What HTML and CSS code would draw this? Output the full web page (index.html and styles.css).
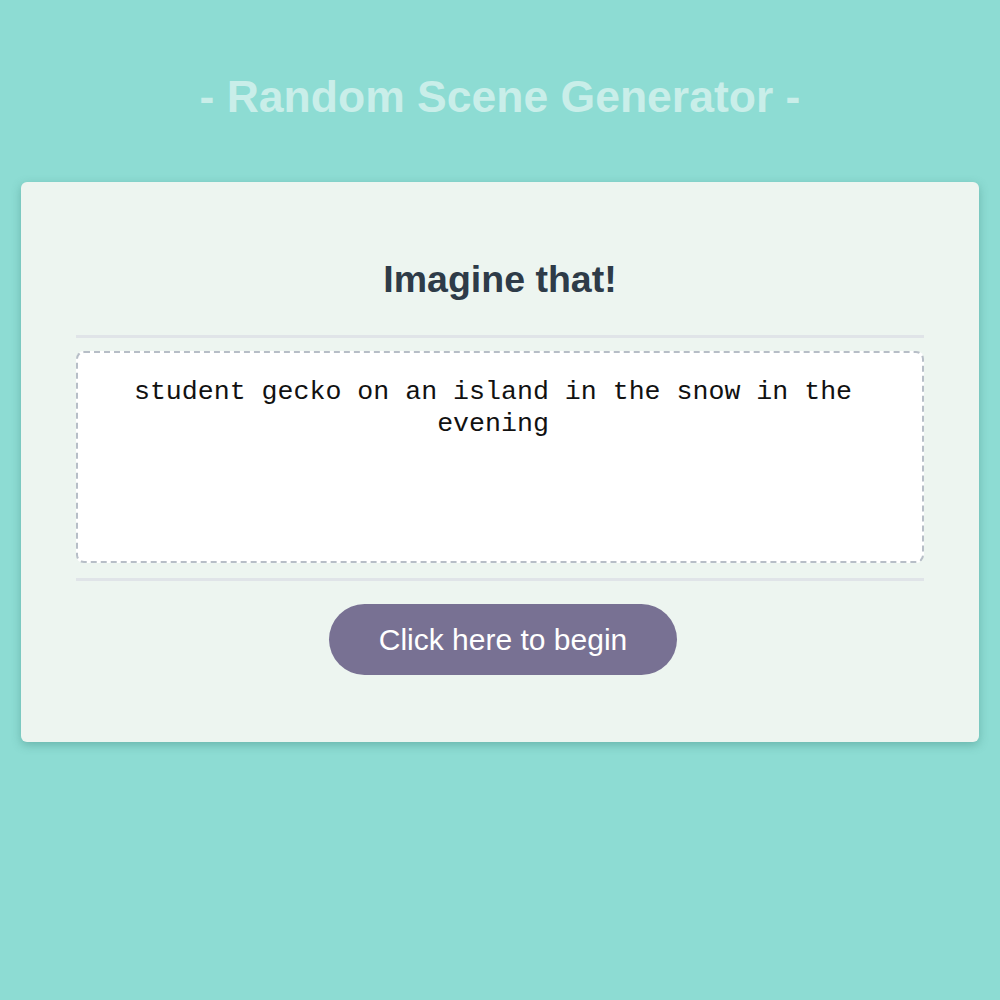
FILE: index.html
```html
<!DOCTYPE html>
<html>
<head>
<meta charset="utf-8">
<title>Random Scene Generator</title>
<link rel="stylesheet" href="styles.css">
</head>
<body>
  <h1 class="site-title">- Random Scene Generator -</h1>
  <main class="card">
    <h2 class="card-title">Imagine that!</h2>
    <div class="rule"></div>
    <div class="scene-box">
      <p class="scene-text">student gecko on an island in the snow in the evening</p>
    </div>
    <div class="rule rule-bottom"></div>
    <button class="begin-btn" type="button">Click here to begin</button>
  </main>
</body>
</html>
```

FILE: styles.css
```css
html, body {
  margin: 0;
  padding: 0;
}
body {
  background: #8ddcd3;
  font-family: "Liberation Sans", Arial, Helvetica, sans-serif;
  min-height: 1000px;
}
.site-title {
  margin: 0;
  padding-top: 70px;
  height: 182px;
  box-sizing: border-box;
  text-align: center;
  font-size: 44.5px;
  line-height: 54px;
  font-weight: bold;
  color: #c9eee9;
}
.card {
  margin: 0 21px;
  background: #edf5f0;
  border-radius: 6px;
  box-shadow: 0 3px 10px rgba(40, 110, 100, 0.35);
  padding: 76px 55px 67px;
  display: flex;
  flex-direction: column;
  align-items: stretch;
}
.card-title {
  margin: 0 0 35px;
  text-align: center;
  font-size: 37.5px;
  line-height: 42px;
  font-weight: bold;
  color: #2e3b48;
}
.rule {
  height: 3px;
  background: #e0e4e8;
}
.scene-box {
  margin-top: 13px;
  height: 212px;
  box-sizing: border-box;
  background: #ffffff;
  border: 2px dashed #b7bec7;
  border-radius: 8px;
  padding: 23px 57px 22px 43px;
}
.scene-text {
  margin: 0;
  text-align: center;
  font-family: "Liberation Mono", "Courier New", monospace;
  font-size: 26.6px;
  line-height: 32px;
  color: #111111;
}
.rule-bottom {
  margin-top: 15px;
}
.begin-btn {
  align-self: center;
  margin-top: 23px;
  margin-left: 6px;
  width: 348px;
  height: 71px;
  border: none;
  border-radius: 36px;
  background: #787193;
  color: #ffffff;
  font-family: "Liberation Sans", Arial, Helvetica, sans-serif;
  font-size: 30px;
  padding: 0;
  cursor: pointer;
}
```
